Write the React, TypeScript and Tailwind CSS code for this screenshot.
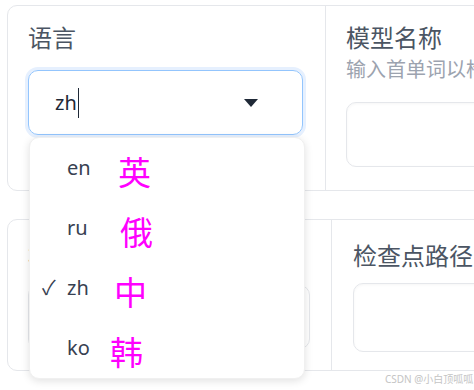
const options = [
  { code: "en", zh: "英", checked: false, shift: "ml-[27px]" },
  { code: "ru", zh: "俄", checked: false, shift: "ml-[29px]" },
  { code: "zh", zh: "中", checked: true, shift: "ml-[23px]" },
  { code: "ko", zh: "韩", checked: false, shift: "ml-[19px]" },
];

export default function App() {
  return (
    <div
      className="relative w-[474px] h-[390px] overflow-hidden bg-white"
      style={{ fontFamily: '"Noto Sans", "Noto Sans CJK SC", sans-serif' }}
    >
      {/* Top card */}
      <div className="ml-[7px] mt-[5px] flex w-[560px] h-[186px] rounded-[10px] border border-[#e5e7eb] bg-white">
        <div className="w-[318px] shrink-0 border-r border-[#e5e7eb] pl-[20px] pt-[16px]">
          <div className="text-[24px] leading-[32px] text-[#4b5563]">语言</div>
          <div className="mt-[16px] flex h-[65px] w-[275px] items-center rounded-[10px] border border-[#93c5fd] pl-[26px] pr-[44px] shadow-[0_0_0_3px_#e6f0fe]">
            <span className="text-[20px] text-[#1f2937]">zh</span>
            <span className="ml-px h-[30px] w-px bg-[#1f2937]" />
            <svg className="ml-auto" width="14" height="8" viewBox="0 0 14 8">
              <path d="M0 0h14L7 8z" fill="#1f2937" />
            </svg>
          </div>
        </div>
        <div className="flex-1 pl-[20px] pt-[16px]">
          <div className="text-[24px] leading-[32px] text-[#4b5563]">模型名称</div>
          <div className="mt-[2px] whitespace-nowrap text-[20px] leading-[28px] text-[#9ca3af]">
            输入首单词以构建模型名称
          </div>
          <div className="mt-[18px] h-[65px] w-[300px] rounded-[10px] border border-[#e5e7eb] shadow-[inset_0_1px_3px_rgba(0,0,0,0.04)]" />
        </div>
      </div>

      {/* Bottom card */}
      <div className="ml-[7px] mt-[28px] flex w-[560px] h-[152px] rounded-[10px] border border-[#e5e7eb] bg-white">
        <div className="w-[324px] shrink-0 border-r border-[#e5e7eb] pl-[20px] pt-[20px]">
          <div className="text-[24px] leading-[32px] text-[#4b5563]">模型路径</div>
          <div className="mt-[13px] h-[64px] w-[282px] rounded-[10px] border border-[#e5e7eb]" />
        </div>
        <div className="flex-1 pl-[21px] pt-[20px]">
          <div className="text-[24px] leading-[32px] text-[#4b5563]">检查点路径</div>
          <div className="mt-[11px] h-[69px] w-[300px] rounded-[10px] border border-[#e5e7eb] shadow-[inset_0_1px_3px_rgba(0,0,0,0.04)]" />
        </div>
      </div>

      {/* Dropdown menu */}
      <div className="absolute left-[29px] top-[137px] w-[276px] rounded-[10px] border border-[#f0f0f0] bg-white shadow-[0_2px_8px_rgba(0,0,0,0.12)]">
        {options.map((o) => (
          <div key={o.code} className="relative flex h-[60px] items-center pl-[37px]">
            {o.checked && (
              <span className="absolute left-[12px] text-[20px] text-[#374151]">✓</span>
            )}
            <span className="w-[24px] text-[20px] text-[#374151]">{o.code}</span>
            <span className={`${o.shift} mt-[8px] text-[33px] leading-none text-[#ff00ff]`}>{o.zh}</span>
          </div>
        ))}
      </div>

      <div className="absolute left-[385px] top-[372px] text-[10px] text-[#c4c4c4]">CSDN @小白顶呱呱</div>
    </div>
  );
}
